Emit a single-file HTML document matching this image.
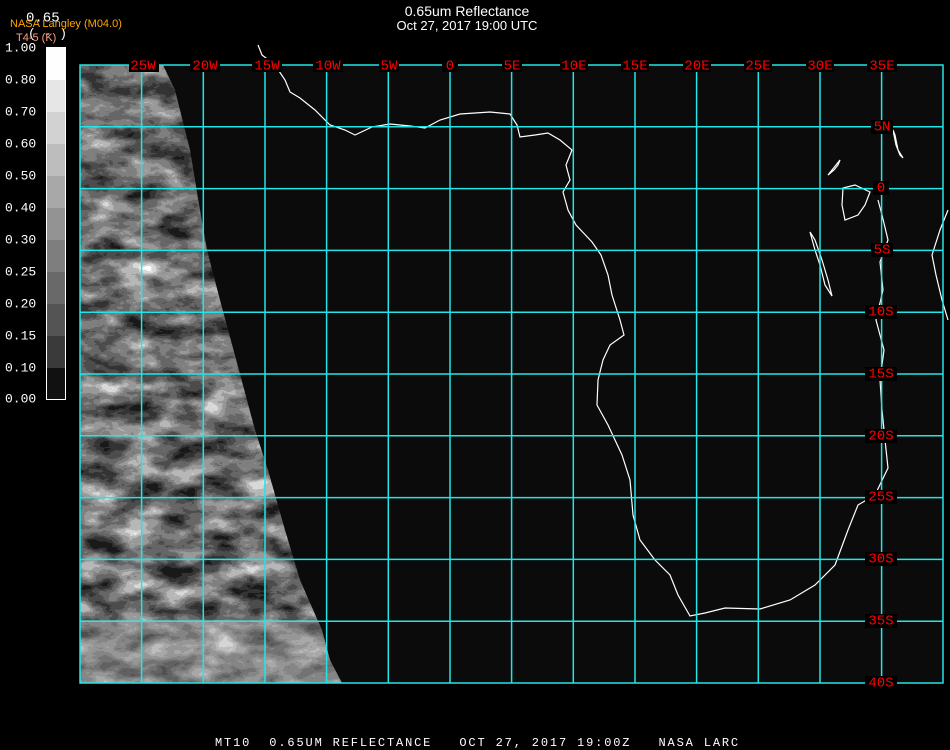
<!DOCTYPE html>
<html><head><meta charset="utf-8"><style>
html,body{margin:0;padding:0;background:#000;width:950px;height:750px;overflow:hidden;font-family:"Liberation Sans",sans-serif}
</style></head><body>
<svg width="950" height="750" style="position:absolute;left:0;top:0" xmlns="http://www.w3.org/2000/svg">
<defs>
<filter id="n" x="0" y="0" width="100%" height="100%" color-interpolation-filters="sRGB">
<feTurbulence type="fractalNoise" baseFrequency="0.025 0.05" numOctaves="5" seed="7"/>
<feColorMatrix type="matrix" values="1.3 0 0 0 -0.24  1.3 0 0 0 -0.24  1.3 0 0 0 -0.24  0 0 0 0 1"/>
<feComponentTransfer>
<feFuncR type="discrete" tableValues="0.1 0.2 0.3 0.4 0.5 0.6 0.72 0.85 1"/>
<feFuncG type="discrete" tableValues="0.1 0.2 0.3 0.4 0.5 0.6 0.72 0.85 1"/>
<feFuncB type="discrete" tableValues="0.1 0.2 0.3 0.4 0.5 0.6 0.72 0.85 1"/>
</feComponentTransfer>
</filter>
<clipPath id="c"><polygon points="80,65 163,65 175,90 190,150 200,210 207,250 220,300 240,374 255,430 268,470 285,530 300,580 322,630 330,660 342,683 80,683"/></clipPath>
</defs>
<rect x="80" y="65" width="863" height="618" fill="#0b0b0b"/>
<g clip-path="url(#c)">
<rect x="80" y="65" width="270" height="618" fill="#fff" filter="url(#n)"/>
<rect x="80" y="620" width="270" height="63" fill="#ccc" opacity="0.3"/>
</g>
<path d="M258,45 L262,55 275,65 285,80 290,92 300,98 315,110 330,125 345,130 355,135 372,127 390,124 410,126 425,128 440,120 460,114 490,112 510,114 517,125 520,137 535,135 548,133 560,140 572,150 566,165 570,180 563,192 568,210 576,225 592,242 601,255 608,275 612,295 620,320 624,335 610,345 603,360 598,380 597,405 608,425 622,455 630,480 633,515 640,540 655,560 670,575 678,595 690,616 705,613 725,608 760,609 790,600 815,585 835,565 848,530 858,505 875,495 888,468 885,440 882,410 880,380 884,350 876,320 883,290 880,262 888,240 882,215 878,200" fill="none" stroke="#fff" stroke-width="1.2"/>
<path d="M948,210 L940,230 932,255 936,275 942,300 948,320" fill="none" stroke="#fff" stroke-width="1.2"/>
<path d="M893,130 L896,145 900,155 903,158 898,150 895,135 Z M840,160 L828,175 834,170 838,165 Z M843,188 L855,185 870,192 865,205 858,215 845,220 842,205 Z M810,232 L815,250 820,265 825,285 832,296 828,280 822,260 815,240 Z" fill="none" stroke="#fff" stroke-width="1.2"/>
<g stroke="#22e6e6" stroke-width="1.5" fill="none">
<path d="M80,65H943V683H80Z"/>
<path d="M141.6,65V683M203.3,65V683M265,65V683M326.6,65V683M388.3,65V683M450,65V683M511.6,65V683M573.3,65V683M635,65V683M696.6,65V683M758.3,65V683M820,65V683M881.6,65V683"/>
<path d="M80,126.8H943M80,188.6H943M80,250.4H943M80,312.2H943M80,374H943M80,435.8H943M80,497.6H943M80,559.4H943M80,621.2H943"/>
</g>
<g font-family="Liberation Mono,monospace" font-size="14" fill="#f00" text-anchor="middle" dominant-baseline="middle">
<g fill="#000" stroke="none">
<rect x="129" y="58" width="30" height="14"/><rect x="190" y="58" width="30" height="14"/><rect x="252" y="58" width="30" height="14"/><rect x="313" y="58" width="30" height="14"/><rect x="379" y="58" width="20" height="14"/><rect x="442" y="58" width="16" height="14"/><rect x="502" y="58" width="20" height="14"/><rect x="560" y="58" width="28" height="14"/><rect x="621" y="58" width="28" height="14"/><rect x="683" y="58" width="28" height="14"/><rect x="744" y="58" width="28" height="14"/><rect x="806" y="58" width="28" height="14"/><rect x="867" y="58" width="30" height="14"/>
<rect x="871" y="120" width="22" height="14"/><rect x="873" y="181" width="16" height="14"/><rect x="871" y="243" width="22" height="14"/><rect x="865" y="305" width="32" height="14"/><rect x="865" y="367" width="32" height="14"/><rect x="865" y="429" width="32" height="14"/><rect x="865" y="490" width="32" height="14"/><rect x="865" y="552" width="32" height="14"/><rect x="865" y="614" width="32" height="14"/><rect x="865" y="676" width="32" height="14"/>
</g>
<text x="143" y="66">25W</text><text x="205" y="66">20W</text><text x="267" y="66">15W</text><text x="328" y="66">10W</text><text x="389" y="66">5W</text><text x="450" y="66">0</text><text x="512" y="66">5E</text><text x="574" y="66">10E</text><text x="635" y="66">15E</text><text x="697" y="66">20E</text><text x="758" y="66">25E</text><text x="820" y="66">30E</text><text x="882" y="66">35E</text>
<text x="882" y="127">5N</text><text x="881" y="188">0</text><text x="882" y="250">5S</text><text x="881" y="312">10S</text><text x="881" y="374">15S</text><text x="881" y="436">20S</text><text x="881" y="497">25S</text><text x="881" y="559">30S</text><text x="881" y="621">35S</text><text x="881" y="683">40S</text>
</g>
<rect x="46.5" y="47.5" width="19" height="352" fill="#000" stroke="#fff" stroke-width="1"/>
<g>
<rect x="47" y="48" width="18" height="32" fill="#fefefe"/><rect x="47" y="80" width="18" height="32" fill="#e6e6e6"/><rect x="47" y="112" width="18" height="32" fill="#d2d2d2"/><rect x="47" y="144" width="18" height="32" fill="#bdbdbd"/><rect x="47" y="176" width="18" height="32" fill="#a8a8a8"/><rect x="47" y="208" width="18" height="32" fill="#939393"/><rect x="47" y="240" width="18" height="32" fill="#7e7e7e"/><rect x="47" y="272" width="18" height="32" fill="#696969"/><rect x="47" y="304" width="18" height="32" fill="#545454"/><rect x="47" y="336" width="18" height="32" fill="#3a3a3a"/><rect x="47" y="368" width="18" height="31" fill="#111"/>
</g>
<g font-family="Liberation Mono,monospace" font-size="13" fill="#fff" dominant-baseline="middle">
<text x="5" y="48">1.00</text><text x="5" y="80">0.80</text><text x="5" y="112">0.70</text><text x="5" y="144">0.60</text><text x="5" y="176">0.50</text><text x="5" y="208">0.40</text><text x="5" y="240">0.30</text><text x="5" y="272">0.25</text><text x="5" y="304">0.20</text><text x="5" y="336">0.15</text><text x="5" y="368">0.10</text><text x="5" y="399">0.00</text>
<text x="26" y="18" font-size="14">0.65</text><text x="28" y="34" font-size="13">( - )</text>
</g>
<text x="10" y="27" font-family="Liberation Sans,sans-serif" font-size="11" fill="#ffa500">NASA Langley (M04.0)</text>
<text x="16" y="41" font-family="Liberation Sans,sans-serif" font-size="11" fill="#ff9f80">T4-5 (K)</text>
<text x="467" y="16" font-family="Liberation Sans,sans-serif" font-size="14" fill="#fff" text-anchor="middle">0.65um Reflectance</text>
<text x="467" y="30" font-family="Liberation Sans,sans-serif" font-size="13" fill="#fff" text-anchor="middle">Oct 27, 2017 19:00 UTC</text>
<text x="215" y="746" font-family="Liberation Mono,monospace" font-size="12" letter-spacing="1.85" fill="#fff" xml:space="preserve">MT10  0.65UM REFLECTANCE   OCT 27, 2017 19:00Z   NASA LARC</text>
</svg>
</body></html>
